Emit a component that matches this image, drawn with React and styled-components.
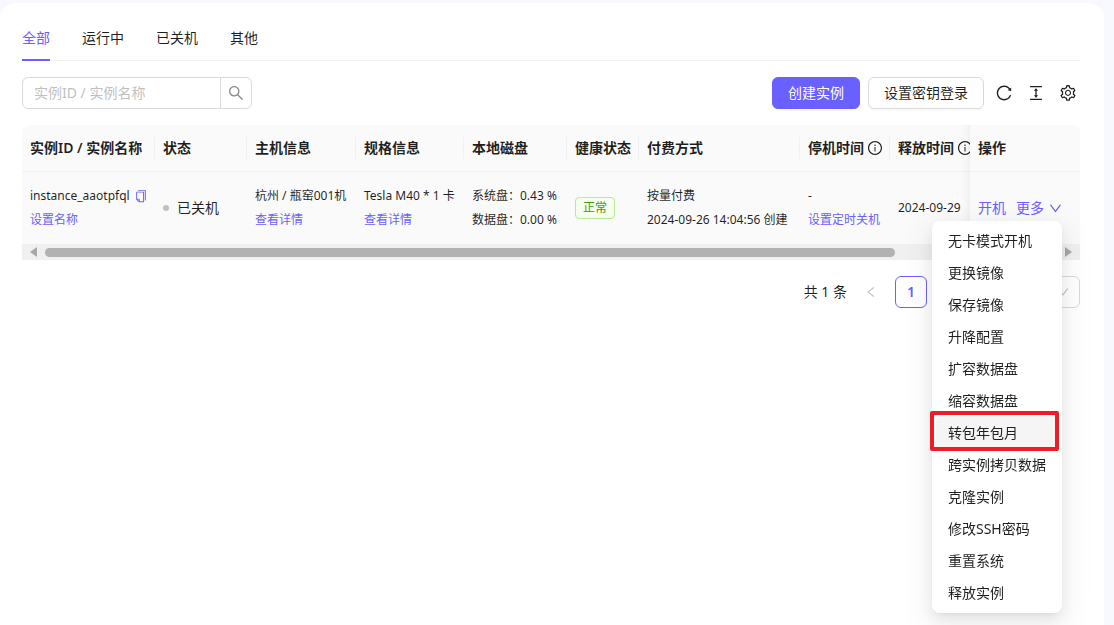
import { useState } from "react";
import styled, { createGlobalStyle } from "styled-components";
import {
  AiOutlineColumnHeight,
  AiOutlineCopy,
  AiOutlineDown,
  AiOutlineInfoCircle,
  AiOutlineLeft,
  AiOutlineReload,
  AiOutlineRight,
  AiOutlineSearch,
  AiOutlineSetting,
} from "react-icons/ai";

const GlobalStyle = createGlobalStyle`
  * {
    box-sizing: border-box;
  }

  body {
    margin: 0;
    background: #f8f8ff;
    color: rgba(0, 0, 0, 0.88);
    font-family: "Noto Sans", "Noto Sans CJK SC", sans-serif;
    font-size: 14px;
    line-height: 22px;
  }

  button,
  input,
  select {
    font: inherit;
    color: inherit;
  }

  svg {
    flex: none;
  }
`;

const Page = styled.div`
  display: flex;
  min-height: 100vh;
  padding: 3px 10px 0 0;
  overflow: hidden;
`;

const Panel = styled.main`
  flex: 1;
  min-width: 0;
  padding: 12px 24px 24px 22px;
  background: #fff;
  border-radius: 16px 16px 0 0;
`;

const TabList = styled.nav`
  display: flex;
  gap: 32px;
  border-bottom: 1px solid #f0f0f0;
`;

const Tab = styled.button`
  padding: 12px 0 10px;
  margin-bottom: -1px;
  border: none;
  border-bottom: 2px solid ${(props) => (props.$active ? "#6960ff" : "transparent")};
  background: none;
  color: ${(props) => (props.$active ? "#6960ff" : "inherit")};
  cursor: pointer;
`;

const Toolbar = styled.div`
  display: flex;
  align-items: center;
  gap: 8px;
  margin: 16px 0;
`;

const SearchBox = styled.form`
  display: flex;
  width: 230px;
  height: 32px;
  margin-right: auto;
  border: 1px solid #d9d9d9;
  border-radius: 6px;
`;

const SearchInput = styled.input`
  flex: 1;
  min-width: 0;
  padding: 0 11px;
  border: none;
  outline: none;
  background: none;

  &::placeholder {
    color: #bfbfbf;
  }
`;

const SearchButton = styled.button`
  display: flex;
  align-items: center;
  justify-content: center;
  width: 31px;
  padding: 0;
  border: none;
  border-left: 1px solid #d9d9d9;
  background: none;
  color: rgba(0, 0, 0, 0.45);
  font-size: 18px;
  cursor: pointer;
`;

const Button = styled.button`
  height: 32px;
  padding: 0 15px;
  border: 1px solid ${(props) => (props.$primary ? "#6960ff" : "#d9d9d9")};
  border-radius: 6px;
  background: ${(props) => (props.$primary ? "#6960ff" : "#fff")};
  color: ${(props) => (props.$primary ? "#fff" : "inherit")};
  box-shadow: 0 2px 0 rgba(0, 0, 0, 0.02);
  white-space: nowrap;
  cursor: pointer;
`;

const IconButton = styled.button`
  display: flex;
  align-items: center;
  justify-content: center;
  width: 24px;
  height: 24px;
  padding: 0;
  border: none;
  background: none;
  font-size: 18px;
  cursor: pointer;
`;

const TableArea = styled.section`
  position: relative;
`;

const TableScroll = styled.div`
  overflow-x: auto;
  scrollbar-width: none;
  border-radius: 8px 8px 0 0;
`;

const Table = styled.table`
  width: 1238px;
  table-layout: fixed;
  border-collapse: separate;
  border-spacing: 0;
`;

const HeadCell = styled.th`
  position: relative;
  width: ${(props) => props.$width}px;
  height: 47px;
  padding: 0 8px;
  border-bottom: 1px solid #f0f0f0;
  background: #fafafa;
  font-weight: 600;
  text-align: left;
  white-space: nowrap;

  &:not(:nth-last-child(-n + 2))::after {
    content: "";
    position: absolute;
    top: 12px;
    right: 0;
    width: 1px;
    height: 22px;
    background: #f0f0f0;
  }
`;

const HeadLabel = styled.span`
  display: flex;
  align-items: center;
  gap: 3px;

  svg {
    font-size: 16px;
  }
`;

const Cell = styled.td`
  padding: 12px 8px;
  background: #fafafa;
  font-size: 12px;
  line-height: 24px;
  white-space: nowrap;
`;

// last column stays in view, with a soft shadow on its left side
const fixedColumn = `
  position: sticky;
  right: 0;
  z-index: 2;

  &::before {
    content: "";
    position: absolute;
    top: 0;
    bottom: -1px;
    left: -30px;
    width: 30px;
    box-shadow: inset -10px 0 8px -8px rgba(5, 5, 5, 0.06);
    pointer-events: none;
  }
`;

const FixedHeadCell = styled(HeadCell)`
  ${fixedColumn}
`;

const FixedCell = styled(Cell)`
  ${fixedColumn}
`;

const Line = styled.div`
  display: flex;
  align-items: center;
  gap: 4px;
`;

const TextLink = styled.a`
  color: #6960ff;
  text-decoration: none;
`;

const CopyButton = styled.button`
  display: flex;
  padding: 0;
  border: none;
  background: none;
  color: #6960ff;
  font-size: 14px;
  cursor: pointer;
`;

const Status = styled.div`
  display: flex;
  align-items: center;
  gap: 8px;
  font-size: 14px;

  &::before {
    content: "";
    width: 6px;
    height: 6px;
    border-radius: 50%;
    background: #bfbfbf;
  }
`;

const Tag = styled.span`
  display: inline-block;
  padding: 0 7px;
  border: 1px solid #b7eb8f;
  border-radius: 4px;
  background: #f6ffed;
  color: #389e0d;
  line-height: 20px;
`;

const Actions = styled.div`
  display: flex;
  align-items: center;
  gap: 10px;
  font-size: 14px;
`;

const MoreButton = styled.button`
  display: flex;
  align-items: center;
  gap: 4px;
  padding: 0;
  border: none;
  background: none;
  color: #6960ff;
  cursor: pointer;

  svg {
    font-size: 15px;
  }
`;

const ScrollTrack = styled.div`
  display: flex;
  align-items: center;
  gap: 6px;
  height: 16px;
  padding: 0 8px;
  background: #f0f0f0;
`;

const ScrollArrow = styled.svg`
  width: 7px;
  height: 10px;
  fill: #a8a8a8;
`;

const ScrollRail = styled.div`
  flex: 1;
  padding: 0 2px;
`;

const ScrollThumb = styled.div`
  width: 84%;
  height: 9px;
  border-radius: 5px;
  background: #b2b2b2;
`;

const Menu = styled.ul`
  position: absolute;
  top: 96px;
  right: 18px;
  z-index: 10;
  width: 130px;
  margin: 0;
  padding: 4px;
  border-radius: 8px;
  background: #fff;
  box-shadow:
    0 6px 16px 0 rgba(0, 0, 0, 0.08),
    0 3px 6px -4px rgba(0, 0, 0, 0.12),
    0 9px 28px 8px rgba(0, 0, 0, 0.05);
  list-style: none;
`;

const MenuItem = styled.li`
  position: relative;
`;

const MenuButton = styled.button`
  display: block;
  width: 100%;
  padding: 5px 12px;
  border: none;
  border-radius: 4px;
  background: ${(props) => (props.$active ? "#f5f5f5" : "none")};
  text-align: left;
  white-space: nowrap;
  cursor: pointer;
`;

const Marker = styled.span`
  position: absolute;
  inset: -6px -1px -2px -6px;
  border: 4px solid #ee1c25;
  border-radius: 2px;
  pointer-events: none;
`;

const Pagination = styled.div`
  display: flex;
  align-items: center;
  justify-content: flex-end;
  gap: 8px;
  margin-top: 16px;
`;

const PageButton = styled.button`
  display: flex;
  align-items: center;
  justify-content: center;
  width: 32px;
  height: 32px;
  padding: 0;
  border: 1px solid ${(props) => (props.$active ? "#6960ff" : "transparent")};
  border-radius: 6px;
  background: #fff;
  color: ${(props) => (props.$active ? "#6960ff" : "rgba(0, 0, 0, 0.25)")};
  font-weight: 600;
`;

const PageSize = styled.label`
  display: grid;
  align-items: center;
  margin-left: 8px;

  select,
  svg {
    grid-area: 1 / 1;
  }

  svg {
    justify-self: end;
    margin-right: 10px;
    color: rgba(0, 0, 0, 0.25);
    pointer-events: none;
  }
`;

const PageSelect = styled.select`
  width: 97px;
  height: 32px;
  padding: 0 11px;
  border: 1px solid #d9d9d9;
  border-radius: 6px;
  background: #fff;
  appearance: none;
`;

const tabs = ["全部", "运行中", "已关机", "其他"];

const columns = [
  { title: "实例ID / 实例名称", width: 133 },
  { title: "状态", width: 92 },
  { title: "主机信息", width: 109 },
  { title: "规格信息", width: 108 },
  { title: "本地磁盘", width: 103 },
  { title: "健康状态", width: 72 },
  { title: "付费方式", width: 161 },
  { title: "停机时间", width: 90, info: true },
  { title: "释放时间", width: 260, info: true },
];

const menuItems = [
  "无卡模式开机",
  "更换镜像",
  "保存镜像",
  "升降配置",
  "扩容数据盘",
  "缩容数据盘",
  "转包年包月",
  "跨实例拷贝数据",
  "克隆实例",
  "修改SSH密码",
  "重置系统",
  "释放实例",
];

const InstanceTable = ({ onMore }) => (
  <TableScroll>
    <Table>
      <thead>
        <tr>
          {columns.map((column) => (
            <HeadCell key={column.title} $width={column.width}>
              <HeadLabel>
                {column.title}
                {column.info && <AiOutlineInfoCircle />}
              </HeadLabel>
            </HeadCell>
          ))}
          <FixedHeadCell $width={110}>操作</FixedHeadCell>
        </tr>
      </thead>
      <tbody>
        <tr>
          <Cell>
            <Line>
              instance_aaotpfql
              <CopyButton aria-label="复制">
                <AiOutlineCopy />
              </CopyButton>
            </Line>
            <TextLink href="#name">设置名称</TextLink>
          </Cell>
          <Cell>
            <Status>已关机</Status>
          </Cell>
          <Cell>
            <Line>杭州 / 瓶窑001机</Line>
            <TextLink href="#host">查看详情</TextLink>
          </Cell>
          <Cell>
            <Line>Tesla M40 * 1 卡</Line>
            <TextLink href="#spec">查看详情</TextLink>
          </Cell>
          <Cell>
            <div>系统盘：0.43 %</div>
            <div>数据盘：0.00 %</div>
          </Cell>
          <Cell>
            <Tag>正常</Tag>
          </Cell>
          <Cell>
            <div>按量付费</div>
            <div>2024-09-26 14:04:56 创建</div>
          </Cell>
          <Cell>
            <div>-</div>
            <TextLink href="#shutdown">设置定时关机</TextLink>
          </Cell>
          <Cell>2024-09-29</Cell>
          <FixedCell>
            <Actions>
              <TextLink href="#start">开机</TextLink>
              <MoreButton onClick={onMore}>
                更多 <AiOutlineDown />
              </MoreButton>
            </Actions>
          </FixedCell>
        </tr>
      </tbody>
    </Table>
  </TableScroll>
);

const App = () => {
  const [tab, setTab] = useState("全部");
  const [menuOpen, setMenuOpen] = useState(true);

  return (
    <>
      <GlobalStyle />
      <Page>
        <Panel>
          <TabList>
            {tabs.map((name) => (
              <Tab key={name} $active={name === tab} onClick={() => setTab(name)}>
                {name}
              </Tab>
            ))}
          </TabList>

          <Toolbar>
            <SearchBox onSubmit={(e) => e.preventDefault()}>
              <SearchInput aria-label="实例ID / 实例名称" placeholder="实例ID / 实例名称" />
              <SearchButton aria-label="搜索">
                <AiOutlineSearch />
              </SearchButton>
            </SearchBox>
            <Button $primary>创建实例</Button>
            <Button>设置密钥登录</Button>
            <IconButton aria-label="刷新">
              <AiOutlineReload />
            </IconButton>
            <IconButton aria-label="密度">
              <AiOutlineColumnHeight />
            </IconButton>
            <IconButton aria-label="列设置">
              <AiOutlineSetting />
            </IconButton>
          </Toolbar>

          <TableArea>
            <InstanceTable onMore={() => setMenuOpen(!menuOpen)} />
            <ScrollTrack>
              <ScrollArrow viewBox="0 0 7 10">
                <path d="M7 0v10L0 5z" />
              </ScrollArrow>
              <ScrollRail>
                <ScrollThumb />
              </ScrollRail>
              <ScrollArrow viewBox="0 0 7 10">
                <path d="M0 0v10l7-5z" />
              </ScrollArrow>
            </ScrollTrack>
            {menuOpen && (
              <Menu>
                {menuItems.map((item) => (
                  <MenuItem key={item}>
                    <MenuButton $active={item === "转包年包月"}>{item}</MenuButton>
                    {item === "转包年包月" && <Marker />}
                  </MenuItem>
                ))}
              </Menu>
            )}
          </TableArea>

          <Pagination>
            <span>共 1 条</span>
            <PageButton aria-label="上一页" disabled>
              <AiOutlineLeft />
            </PageButton>
            <PageButton $active>1</PageButton>
            <PageButton aria-label="下一页" disabled>
              <AiOutlineRight />
            </PageButton>
            <PageSize>
              <PageSelect aria-label="每页条数">
                <option>10 条/页</option>
              </PageSelect>
              <AiOutlineDown />
            </PageSize>
          </Pagination>
        </Panel>
      </Page>
    </>
  );
};

export default App;
